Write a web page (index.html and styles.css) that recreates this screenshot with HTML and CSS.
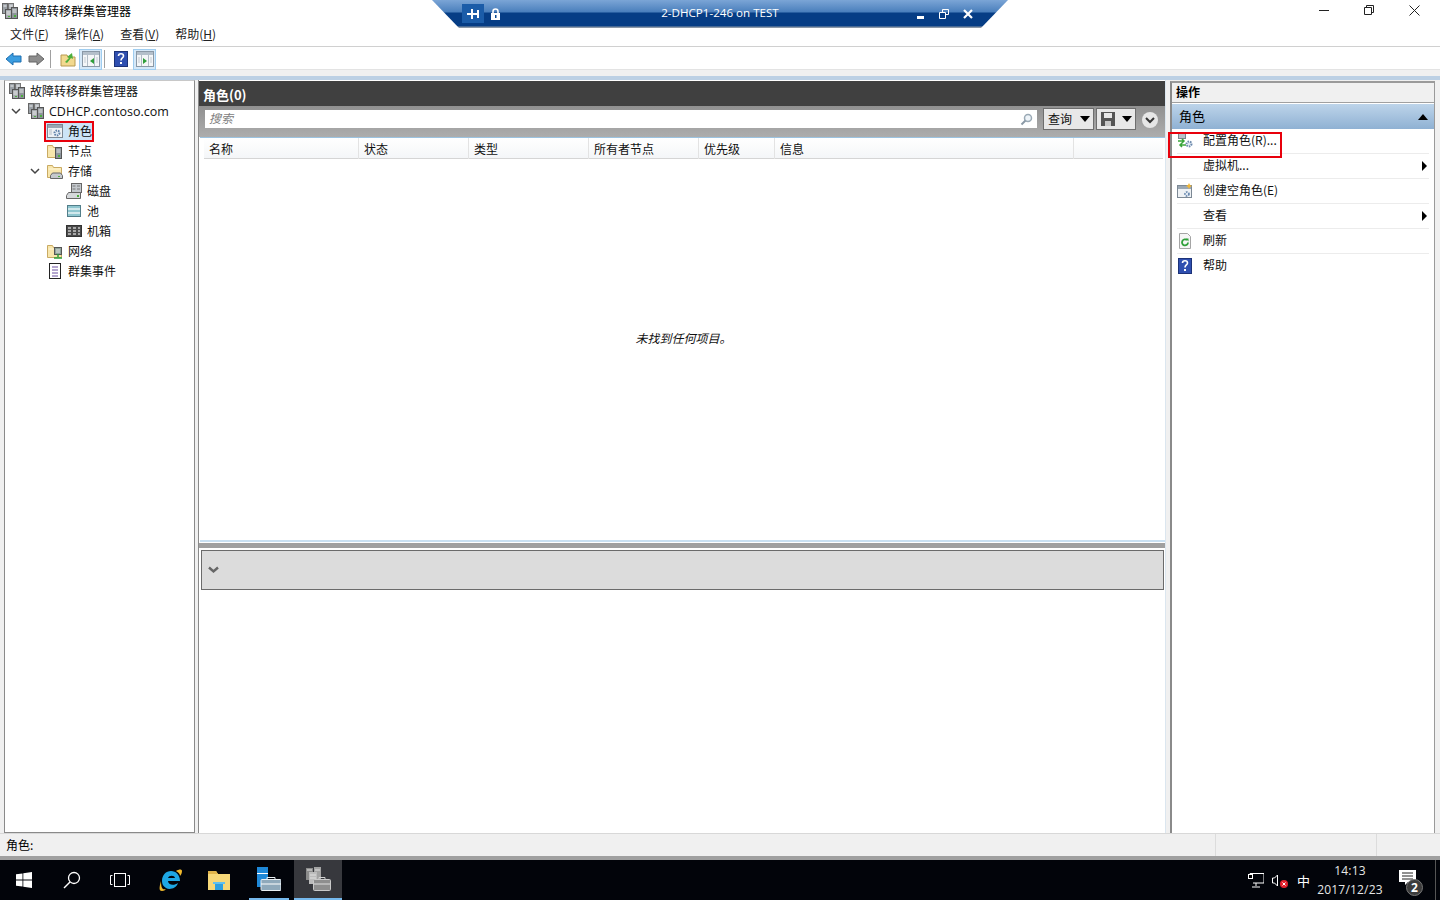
FILE: index.html
```html
<!DOCTYPE html>
<html lang="zh-CN">

<head>
    <meta charset="utf-8">
    <title>故障转移群集管理器</title>
    <link rel="stylesheet" href="styles.css">
</head>

<body>
    <svg class="defs" width="0" height="0">
        <defs>
            <symbol id="server" viewBox="0 0 16 16">
                <rect x="0.500" y="0.500" width="5" height="10" fill="#9aa0a6" stroke="#666"/>
                <rect x="6.500" y="0.500" width="5" height="10" fill="#b2b7bc" stroke="#777"/>
                <rect x="9.500" y="4.500" width="6" height="11" fill="#8f959b" stroke="#555"/>
                <rect x="3.500" y="6.500" width="6" height="9" fill="#a6abb0" stroke="#555"/>
                <path d="M1.500 3h3M7.500 3h3M4.500 9h4M4.500 11h4M10.500 7h4M10.500 9h4" stroke="#ececec"/>
                <rect x="12" y="12" width="2" height="2" fill="#4caf3c"/>
                <rect x="6" y="13" width="2" height="1" fill="#4caf3c"/>
            </symbol>
            <symbol id="folder" viewBox="0 0 16 16">
                <path d="M.5 2.500h5l1 2h8v10H.5z" fill="#f8e6ac" stroke="#c9aa63"/>
                <path d="M1.500 6h12" stroke="#fff6d8"/>
            </symbol>
            <symbol id="helpicon" viewBox="0 0 16 16">
                <rect x="1.500" y=".5" width="13" height="15" fill="#2f4fb0" stroke="#1c3278"/>
                <path d="M5.500 5c0-3 5-3 5 0 0 2-2.500 2-2.500 4.500" fill="none" stroke="#fff" stroke-width="1.600"/>
                <rect x="7" y="11" width="2" height="2" fill="#fff"/>
            </symbol>
            <symbol id="panel" viewBox="0 0 18 16">
                <rect x=".5" y=".5" width="17" height="15" fill="#f4f6f8" stroke="#8a98a6"/>
                <rect x="1" y="1" width="16" height="3" fill="#b4bfca"/>
                <path d="M5.500 4v11M12.500 4v11" stroke="#b3bdc7"/>
                <path d="M2 7h2M2 9h2M2 11h2M14 7h2M14 9h2M14 11h2" stroke="#c3cbd3"/>
            </symbol>
        </defs>
    </svg>

    <div class="rdp-bar">
        <div class="rdp-left">
            <span class="rdp-pin">
                <svg width="14" height="12" viewBox="0 0 14 12"><path d="M1 5h4V1h2v4h4V2h2v8h-2V7H7v4H5V7H1z" fill="#fff"/></svg>
            </span>
            <svg class="rdp-lock" width="11" height="12" viewBox="0 0 11 12"><path d="M3 5V3.500a2.500 2.500 0 0 1 5 0V5" fill="none" stroke="#fff" stroke-width="1.600"/><path d="M1 5h9v7H1z" fill="#fff"/><rect x="5" y="7" width="1.500" height="3" fill="#0a4a94"/></svg>
        </div>
        <div class="rdp-title">2-DHCP1-246 on TEST</div>
        <div class="rdp-right">
            <svg width="8" height="10" viewBox="0 0 8 10"><rect y="7" width="7" height="3" fill="#fff"/></svg>
            <svg width="10" height="10" viewBox="0 0 10 10"><path d="M3.500 3V.5h6v5H7M.5 3.500h6v6h-6z" fill="none" stroke="#fff"/></svg>
            <svg width="10" height="10" viewBox="0 0 10 10"><path d="M1 1l8 8M9 1L1 9" stroke="#fff" stroke-width="2.200"/></svg>
        </div>
    </div>

    <div class="app">
        <header class="titlebar">
            <svg class="icon16" width="16" height="16"><use href="#server"/></svg>
            <span class="app-title">故障转移群集管理器</span>
            <div class="win-btns">
                <svg width="10" height="10" viewBox="0 0 10 10"><path d="M0 5.500h10" stroke="#222"/></svg>
                <svg width="10" height="10" viewBox="0 0 10 10"><path d="M2.500 2.500V.5h7v7h-2M.5 2.500h7v7h-7z" fill="none" stroke="#222"/></svg>
                <svg width="11" height="11" viewBox="0 0 11 11"><path d="M.5.5l10 10M10.500.5l-10 10" stroke="#222"/></svg>
            </div>
        </header>

        <nav class="menubar">
            <span>文件(<u>F</u>)</span>
            <span>操作(<u>A</u>)</span>
            <span>查看(<u>V</u>)</span>
            <span>帮助(<u>H</u>)</span>
        </nav>

        <div class="toolbar">
            <svg width="17" height="14" viewBox="0 0 17 14"><path d="M1 7l7-6v3h8v6H8v3z" fill="#3b9de0" stroke="#1f6fb0"/></svg>
            <svg class="tool-next" width="17" height="14" viewBox="0 0 17 14"><path d="M16 7L9 1v3H1v6h8v3z" fill="#8d8d8d" stroke="#666"/></svg>
            <span class="tool-sep"></span>
            <svg class="tool-up" width="16" height="16" viewBox="0 0 16 16"><path d="M1 4h6l1 2h7v9H1z" fill="#f2d98f" stroke="#b89a50"/><path d="M5 11l4-4-2-1 5-4 1 6-2-1-4 5z" fill="#4caf3c"/></svg>
            <span class="tool-btn">
                <svg width="18" height="16"><use href="#panel"/><path d="M8 10l4-3v6z" fill="#2e9e3a"/></svg>
            </span>
            <span class="tool-sep sep-b"></span>
            <svg class="tool-help" width="16" height="16"><use href="#helpicon"/></svg>
            <span class="tool-btn btn-b">
                <svg width="18" height="16"><use href="#panel"/><path d="M7 7l4 3-4 3z" fill="#2e9e3a"/></svg>
            </span>
        </div>

        <main class="workspace">
            <aside class="tree">
                <div class="tree-row lv0">
                    <svg width="16" height="16"><use href="#server"/></svg>
                    <span>故障转移群集管理器</span>
                </div>
                <div class="tree-row lv1">
                    <svg class="twisty" width="10" height="7" viewBox="0 0 10 7"><path d="M1 1l4 4 4-4" fill="none" stroke="#444" stroke-width="1.500"/></svg>
                    <svg width="16" height="16"><use href="#server"/></svg>
                    <span class="latin">CDHCP.contoso.com</span>
                </div>
                <div class="tree-row lv2">
                    <span class="tree-sel">
                        <svg width="16" height="16" viewBox="0 0 16 16"><rect x=".5" y="1.500" width="15" height="13" fill="#eef1f4" stroke="#7c8894"/><rect x="1" y="2" width="14" height="3" fill="#9aa7b3"/><path d="M2 7h3M2 9h3M2 11h3" stroke="#b5bec7"/><circle cx="10" cy="10" r="2.500" fill="#dfe8f2" stroke="#5f80a8" stroke-width="2" stroke-dasharray="1.500 1"/></svg>
                        <span>角色</span>
                    </span>
                </div>
                <div class="tree-row lv2">
                    <svg width="16" height="16"><use href="#folder"/><rect x="8.500" y="4.500" width="6" height="11" fill="#8d949b" stroke="#555"/><path d="M9.500 7h4M9.500 9h4" stroke="#e6e6e6"/><rect x="11" y="12" width="2" height="2" fill="#4caf3c"/></svg>
                    <span>节点</span>
                </div>
                <div class="tree-row lv2">
                    <svg class="twisty" width="10" height="7" viewBox="0 0 10 7"><path d="M1 1l4 4 4-4" fill="none" stroke="#444" stroke-width="1.500"/></svg>
                    <svg width="16" height="16"><use href="#folder"/><path d="M3.500 15.500v-3l2-2.500h8l2 2.500v3z" fill="#c4c8cc" stroke="#666"/><rect x="11" y="13" width="2" height="1" fill="#4caf3c"/></svg>
                    <span>存储</span>
                </div>
                <div class="tree-row lv3">
                    <svg width="16" height="16" viewBox="0 0 16 16"><rect x="5.500" y=".5" width="10" height="9" fill="#c3c8cd" stroke="#666"/><path d="M6.500 3h3M11 3h3M6.500 6h3M11 6h3" stroke="#777"/><path d="M.5 15.500v-3l2-3h12v6z" fill="#d5d8db" stroke="#666"/><rect x="11" y="12" width="2" height="2" fill="#4caf3c"/></svg>
                    <span>磁盘</span>
                </div>
                <div class="tree-row lv3">
                    <svg width="16" height="16" viewBox="0 0 16 16"><rect x="1.500" y="2.500" width="13" height="11" fill="#8fc6cf" stroke="#527e8a"/><path d="M2 6h12M2 10h12" stroke="#e8f4f6" stroke-width="1.500"/></svg>
                    <span>池</span>
                </div>
                <div class="tree-row lv3">
                    <svg width="16" height="16" viewBox="0 0 16 16"><rect x=".5" y="2.500" width="15" height="11" fill="#4a4a4a" stroke="#333"/><path d="M2 5h3M7 5h3M12 5h2M2 8h3M7 8h3M12 8h2M2 11h3M7 11h3M12 11h2" stroke="#c9c9c9" stroke-width="1.500"/></svg>
                    <span>机箱</span>
                </div>
                <div class="tree-row lv2">
                    <svg width="16" height="16"><use href="#folder"/><rect x="7.500" y="4.500" width="7" height="7" fill="#8fa39a" stroke="#555"/><path d="M9 7h4M9 9h4" stroke="#e6e6e6"/><path d="M11 11v3M7 15h8" stroke="#2e9e3a" stroke-width="1.500"/></svg>
                    <span>网络</span>
                </div>
                <div class="tree-row lv2">
                    <svg width="16" height="16" viewBox="0 0 16 16"><rect x="2.500" y=".5" width="11" height="15" fill="#fff" stroke="#222"/><path d="M5 4h6M5 7h6M5 10h6M5 13h6" stroke="#6b4fa0"/></svg>
                    <span>群集事件</span>
                </div>
            </aside>

            <section class="center">
                <div class="center-head">角色(0)</div>
                <div class="filter-bar">
                    <div class="search-box">
                        <span>搜索</span>
                        <svg width="13" height="13" viewBox="0 0 13 13"><circle cx="8" cy="5" r="3.500" fill="#eef4f9" stroke="#9aa9b5" stroke-width="1.500"/><path d="M5.500 7.500L1.500 11.500" stroke="#8b9aa6" stroke-width="2"/></svg>
                    </div>
                    <div class="filter-btn query-btn"><span>查询</span><i class="caret"></i></div>
                    <div class="filter-btn save-btn">
                        <svg width="14" height="14" viewBox="0 0 14 14"><path d="M0 0h14v14H0z" fill="#555"/><rect x="3" y="1" width="8" height="5" fill="#e8e8e8"/><rect x="4" y="9" width="6" height="5" fill="#c8c8c8"/></svg>
                        <i class="caret"></i>
                    </div>
                    <div class="round-btn">
                        <svg width="10" height="7" viewBox="0 0 10 7"><path d="M1 1l4 4 4-4" fill="none" stroke="#333" stroke-width="2"/></svg>
                    </div>
                </div>
                <div class="grid-wrap">
                    <div class="grid-head">
                        <span class="col-name">名称</span>
                        <span class="col-state">状态</span>
                        <span class="col-type">类型</span>
                        <span class="col-owner">所有者节点</span>
                        <span class="col-prio">优先级</span>
                        <span class="col-info">信息</span>
                    </div>
                    <div class="grid-empty">未找到任何项目。</div>
                </div>
                <div class="splitter"></div>
                <div class="detail">
                    <div class="detail-bar">
                        <svg width="11" height="8" viewBox="0 0 11 8"><path d="M1 1.500l4.500 4 4.500-4" fill="none" stroke="#666" stroke-width="2.400"/></svg>
                    </div>
                </div>
            </section>

            <aside class="actions">
                <div class="actions-head">操作</div>
                <div class="actions-section">
                    <span>角色</span>
                    <i class="caret-up"></i>
                </div>
                <ul class="action-list">
                    <li class="action action-first">
                        <svg width="16" height="16" viewBox="0 0 16 16"><rect x="1.500" y=".5" width="7" height="5" fill="#b9c1c8" stroke="#7b858e"/><path d="M1 8h6M5 6l2 2-2 2M9 12H3M5 10l-2 2 2 2" stroke="#3aa53a" stroke-width="1.500" fill="none"/><circle cx="12" cy="11" r="2.500" fill="#dfe8f2" stroke="#6d8aad" stroke-width="2" stroke-dasharray="1.500 1"/></svg>
                        <span>配置角色(R)...</span>
                        <b class="red-box"></b>
                    </li>
                    <li class="action">
                        <span class="no-icon">虚拟机...</span>
                        <i class="caret-right"></i>
                    </li>
                    <li class="action">
                        <svg width="16" height="16" viewBox="0 0 16 16"><rect x=".5" y="2.500" width="14" height="12" fill="#eef1f4" stroke="#7c8894"/><rect x="1" y="3" width="13" height="3" fill="#9aa7b3"/><circle cx="10" cy="11" r="2" fill="#dfe8f2" stroke="#5f80a8" stroke-width="1.600" stroke-dasharray="1.500 1"/><path d="M12 0l1 2 2 1-2 1-1 2-1-2-2-1 2-1z" fill="#f2b636"/></svg>
                        <span>创建空角色(E)</span>
                    </li>
                    <li class="action">
                        <span class="no-icon">查看</span>
                        <i class="caret-right"></i>
                    </li>
                    <li class="action">
                        <svg width="16" height="16" viewBox="0 0 16 16"><path d="M2.500.5h8l3 3v12h-11z" fill="#f6f6f6" stroke="#a5a5a5"/><path d="M11 9.500a3 3 0 1 1-1-2.300" fill="none" stroke="#2fa03a" stroke-width="1.800"/><path d="M8.500 5.500h3v3z" fill="#2fa03a"/></svg>
                        <span>刷新</span>
                    </li>
                    <li class="action">
                        <svg width="16" height="16"><use href="#helpicon"/></svg>
                        <span>帮助</span>
                    </li>
                </ul>
            </aside>
        </main>

        <footer class="statusbar">
            <span class="status-main">角色:</span>
            <span class="status-cell"></span>
            <span class="status-cell cell-end"></span>
        </footer>
    </div>

    <div class="taskbar">
        <div class="task-left">
            <span class="task-btn">
                <svg width="16" height="16" viewBox="0 0 16 16"><path d="M0 2.300l6.500-.9v6.200H0zM7.300 1.300L16 0v7.600H7.300zM0 8.400h6.500v6.200L0 13.700zM7.300 8.400H16V16l-8.700-1.200z" fill="#fff"/></svg>
            </span>
            <span class="task-btn">
                <svg width="18" height="18" viewBox="0 0 18 18"><circle cx="11" cy="7" r="5.500" fill="none" stroke="#fff" stroke-width="1.300"/><path d="M7 11l-6 6" stroke="#fff" stroke-width="1.500"/></svg>
            </span>
            <span class="task-btn">
                <svg width="20" height="14" viewBox="0 0 20 14"><rect x="4.500" y=".5" width="11" height="13" fill="none" stroke="#fff"/><path d="M2.500 2.500H.5v9h2M17.500 2.500h2v9h-2" fill="none" stroke="#fff"/></svg>
            </span>
            <span class="task-btn task-ie">
                <svg width="24" height="24" viewBox="0 0 24 24"><path d="M3 13c0-6 4-10 9-10 5 0 9 4 9 10H9c0 4 6 5 10 2-2 6-9 7-12 5-3-2-4-4-4-7zm6-3h7c-.5-3-6-3-7 0z" fill="#1ea7e4" fill-rule="evenodd"/><path d="M17 3c3-2 6-2 6 0 0 2-1 4-2 5 0-2-1-3-4-5zM2 13C0 20 0 23 3 23c2 0 3-1 4-2-3 1-5 0-5-8z" fill="#f0b92d"/></svg>
            </span>
            <span class="task-btn">
                <svg width="22" height="19" viewBox="0 0 22 19"><path d="M0 0h8l2 3h12v16H0z" fill="#f6d778"/><path d="M0 0h8l2 3H0z" fill="#e0b44a"/><path d="M7 11h8v8H7z" fill="#2d9fe0"/><path d="M5 11h12v2H5z" fill="#60c0ef"/></svg>
            </span>
            <span class="task-btn task-open">
                <svg width="24" height="24" viewBox="0 0 24 24"><rect y="0" width="11" height="20" fill="#1e88d8"/><rect y="6" width="11" height="1" fill="#fff"/><rect x="4" y="12.500" width="20" height="11" rx="1" fill="#8fa9bb" stroke="#e8eef2"/><path d="M10 12.500v-2h8v2" fill="none" stroke="#e8eef2"/><path d="M4 17h20" stroke="#fff"/></svg>
            </span>
            <span class="task-btn task-active">
                <svg width="26" height="24" viewBox="0 0 26 24"><rect x="1" y="1" width="7" height="12" fill="#8b8b8b"/><rect x="9" y="0" width="7" height="12" fill="#a3a3a3"/><rect x="4" y="5" width="8" height="12" fill="#bcbcbc"/><path d="M2 3h5M10 3h5M5 8h6M5 11h6" stroke="#e0e0e0"/><rect x="8.500" y="12.500" width="17" height="11" rx="1" fill="#8e8e8e" stroke="#c9c9c9"/><path d="M9 17h16" stroke="#dedede"/><path d="M14 12.500v-2h6v2" fill="none" stroke="#d0d0d0"/></svg>
            </span>
        </div>
        <div class="tray">
            <svg width="16" height="15" viewBox="0 0 16 15"><path d="M2 3.500V.5h14v9.500H5M8 10v3M4 14h8" fill="none" stroke="#fff"/><rect x=".5" y="1.500" width="4" height="4" fill="#000" stroke="#fff"/></svg>
            <svg class="tray-sound" width="16" height="15" viewBox="0 0 16 15"><path d="M.5 5h2l3-3v11l-3-3h-2z" fill="none" stroke="#fff"/><circle cx="12" cy="11" r="4" fill="#e3202c"/><path d="M10.500 9.500l3 3M13.500 9.500l-3 3" stroke="#fff"/></svg>
            <span class="tray-ime">中</span>
            <div class="clock">
                <span>14:13</span>
                <span>2017/12/23</span>
            </div>
            <div class="notify">
                <svg width="17" height="15" viewBox="0 0 17 15"><path d="M0 0h17v12H9l-3 3v-3H0z" fill="#fff"/><path d="M3 3h11M3 6h11M3 9h11" stroke="#222"/></svg>
                <span class="notify-badge">2</span>
            </div>
            <span class="show-desktop"></span>
        </div>
    </div>
</body>

</html>
```
FILE: styles.css
```css
* {
    box-sizing: border-box;
}

html,
body {
    margin: 0;
    height: 100%;
    overflow: hidden;
}

body {
    display: flex;
    flex-direction: column;
    width: 1440px;
    height: 900px;
    font-family: "Noto Sans CJK SC", "Noto Sans", sans-serif;
    font-size: 12px;
    color: #000;
    background-color: #fff;
}

.defs {
    position: absolute;
}

svg {
    flex: none;
    display: block;
}

.app {
    flex: 1;
    display: flex;
    flex-direction: column;
    min-height: 0;
    background-color: #f0f0f0;
}

/* remote desktop bar */
.rdp-bar {
    position: absolute;
    top: 0;
    left: 432px;
    width: 576px;
    height: 28px;
    display: flex;
    align-items: flex-start;
    padding: 4px 34px 0 30px;
    color: #fff;
    background: linear-gradient(#7ba5d6 0, #4a7fbc 12px, #063d85 13px, #063d85 26px, #8a97a6 27px);
    clip-path: polygon(0 0, 100% 0, 549px 100%, 27px 100%);
    z-index: 5;
}

.rdp-left,
.rdp-right {
    display: flex;
    align-items: center;
    width: 136px;
    height: 19px;
}

.rdp-pin {
    display: flex;
    align-items: center;
    justify-content: center;
    width: 22px;
    height: 19px;
    margin-right: 6px;
    background-color: #1b5ca8;
}

.rdp-right {
    gap: 14px;
    justify-content: flex-end;
    padding-right: 1px;
}

.rdp-title {
    flex: 1;
    padding-left: 4px;
    text-align: center;
    font-family: "Open Sans", sans-serif;
    font-size: 11.600px;
    line-height: 18px;
}

/* window chrome */
.titlebar {
    height: 23px;
    display: flex;
    align-items: center;
    padding: 0 0 1px 2px;
    background-color: #fff;
}

.app-title {
    margin-left: 5px;
    padding-bottom: 2px;
}

.win-btns {
    margin-left: auto;
    display: flex;
    align-items: center;
    gap: 35px;
    padding: 0 20px 2px 0;
}

.menubar {
    height: 24px;
    display: flex;
    align-items: center;
    gap: 16px;
    padding: 0 0 3px 10px;
    background-color: #fff;
    border-bottom: 1px solid #d0d0d0;
    color: #222;
}

.toolbar {
    height: 23px;
    display: flex;
    align-items: center;
    padding: 2px 0 0 5px;
    background-color: #fff;
    border-bottom: 1px solid #e3e3e3;
}

.tool-next {
    margin-left: 6px;
}

.tool-sep {
    width: 1px;
    height: 18px;
    margin: 0 9px 0 5px;
    background-color: #a0a0a0;
}

.tool-up {
    margin-right: 3px;
}

.tool-btn {
    width: 23px;
    height: 21px;
    display: flex;
    align-items: center;
    justify-content: center;
    background-color: #d5e8f8;
    border: 1px solid #9fcdf0;
}

.toolbar .sep-b {
    margin: 0 8px 0 2px;
}

.tool-help {
    margin-right: 4px;
}

.workspace {
    flex: 1;
    min-height: 0;
    display: flex;
    padding: 10px 4px 0;
    background: linear-gradient(#f0f0f0 0, #f0f0f0 6px, #bcd0e4 6px, #bcd0e4 10px, #f0f0f0 10px);
}

/* tree */
.tree {
    width: 191px;
    background-color: #fff;
    border: 1px solid #8a8a8a;
    border-top-color: #c8c8c8;
}

.tree-row {
    height: 20px;
    display: flex;
    align-items: center;
    white-space: nowrap;
    color: #111;
}

.tree-row > span {
    margin-left: 5px;
    padding-bottom: 2px;
}

.tree-row > .latin {
    padding-bottom: 0;
    font-family: "Open Sans", sans-serif;
    font-size: 12.500px;
}

.lv0 {
    padding-left: 4px;
}

.lv1 {
    padding-left: 6px;
}

.lv2 {
    padding-left: 42px;
}

.lv3 {
    padding-left: 61px;
}

.twisty {
    margin-left: -17px;
    margin-right: 7px;
}

.lv1 .twisty {
    margin-left: 0;
    margin-right: 7px;
}

.tree-row > .tree-sel {
    display: flex;
    align-items: center;
    gap: 5px;
    margin: 0 0 0 -3px;
    padding: 0 0 0 1px;
    width: 50px;
    height: 21px;
    background-color: #cce4f7;
    border: 2px solid #e8000c;
}

.tree-sel span {
    padding-bottom: 2px;
}

/* center */
.center {
    width: 968px;
    margin-left: 3px;
    padding-top: 1px;
    display: flex;
    flex-direction: column;
    background-color: #fff;
    border-left: 1px solid #8a8a8a;
    border-right: 1px solid #dbe6ef;
}

.center-head {
    height: 25px;
    padding: 4px 0 0 4px;
    color: #fff;
    font-size: 13px;
    font-weight: 700;
    background-color: #404040;
}

.filter-bar {
    height: 31px;
    display: flex;
    align-items: flex-start;
    padding: 2px 7px 0 6px;
    background: linear-gradient(#909090, #adadad);
}

.search-box {
    width: 832px;
    height: 18px;
    margin-top: 2px;
    display: flex;
    align-items: center;
    justify-content: space-between;
    padding: 0 4px;
    background-color: #fff;
    color: #808080;
    font-style: italic;
}

.search-box span {
    padding-bottom: 3px;
}

.filter-btn {
    height: 22px;
    display: flex;
    align-items: center;
    padding-left: 4px;
    background-color: #e8e8e8;
    border: 1px solid #6e6e6e;
    color: #111;
}

.filter-btn span {
    padding-bottom: 2px;
}

.query-btn {
    width: 51px;
    margin-left: 6px;
}

.save-btn {
    width: 40px;
    margin-left: 2px;
}

.caret {
    margin-left: auto;
    margin-right: 3px;
    border-top: 6px solid #000;
    border-left: 5px solid transparent;
    border-right: 5px solid transparent;
}

.round-btn {
    width: 16px;
    height: 16px;
    margin: 4px 0 0 6px;
    display: flex;
    align-items: center;
    justify-content: center;
    border-radius: 50%;
    background-color: #e6e6e6;
}

.grid-wrap {
    height: 405px;
    display: flex;
    flex-direction: column;
    border-top: 1px solid #9cc3e0;
    border-bottom: 2px solid #c9e0f2;
    margin: 0 0 0 1px;
    padding: 0 2px 0 4px;
}

.grid-head {
    height: 21px;
    display: grid;
    grid-template-columns: 155px 110px 120px 110px 76px 299px;
    align-items: center;
    background: linear-gradient(#fff, #f4f6f8);
    border-bottom: 1px solid #d5d5d5;
}

.grid-head span {
    height: 100%;
    padding: 0 0 0 5px;
    line-height: 21px;
    border-right: 1px solid #e3e3e3;
    color: #111;
}

.grid-empty {
    flex: 1;
    display: flex;
    align-items: center;
    justify-content: center;
    padding-bottom: 24px;
    font-style: italic;
    color: #111;
}

.splitter {
    height: 5px;
    margin-top: 1px;
    background-color: #a0a0a0;
}

.detail {
    flex: 1;
    padding: 2px 1px 0 2px;
}

.detail-bar {
    height: 40px;
    display: flex;
    align-items: center;
    padding-left: 6px;
    background-color: #dcdcdc;
    border: 1px solid #6b6b6b;
}

/* actions pane */
.actions {
    width: 265px;
    margin: 1px 0 0 4px;
    background-color: #fff;
    border-left: 2px solid #8a8a8a;
    border-right: 1px solid #9a9a9a;
    border-top: 2px solid #9a9a9a;
}

.actions-head {
    height: 20px;
    padding: 0 0 0 4px;
    font-weight: 700;
    line-height: 18px;
    background-color: #f0f0f0;
    border-bottom: 1px solid #a0a0a0;
}

.actions-section {
    height: 25px;
    margin-top: 1px;
    display: flex;
    align-items: center;
    justify-content: space-between;
    padding: 0 6px 0 7px;
    font-size: 13px;
    background: linear-gradient(#bdd4ea, #8fb1d3);
}

.actions-section span {
    padding-bottom: 2px;
}

.caret-up {
    border-bottom: 6px solid #000;
    border-left: 5px solid transparent;
    border-right: 5px solid transparent;
}

.caret-right {
    margin-left: auto;
    margin-right: 2px;
    border-left: 5px solid #000;
    border-top: 5px solid transparent;
    border-bottom: 5px solid transparent;
}

.action-list {
    list-style: none;
    margin: 0;
    padding: 0 5px 0 5px;
}

.action {
    position: relative;
    height: 25px;
    display: flex;
    align-items: center;
    padding-bottom: 1px;
    border-bottom: 1px solid #ececec;
    color: #111;
}

.action:last-child {
    border-bottom: 1px solid #fff;
}

.action span {
    margin-left: 10px;
    padding-bottom: 2px;
}

.action .no-icon {
    margin-left: 26px;
}

.red-box {
    position: absolute;
    top: 3px;
    left: -9px;
    width: 114px;
    height: 26px;
    border: 2px solid #e8000c;
}

/* status bar */
.statusbar {
    height: 27px;
    display: flex;
    background-color: #f0f0f0;
    border-top: 1px solid #d8d8d8;
    border-bottom: 4px solid #a0a0a0;
}

.status-main {
    width: 1216px;
    padding-left: 6px;
    line-height: 22px;
    border-right: 1px solid #dcdcdc;
}

.status-cell {
    width: 161px;
    border-right: 1px solid #dcdcdc;
}

.cell-end {
    width: 59px;
    border-right: 0;
}

/* taskbar */
.taskbar {
    height: 40px;
    display: flex;
    justify-content: space-between;
    background-color: #02040a;
    color: #e6e6e6;
}

.task-left {
    display: flex;
}

.task-btn {
    width: 48px;
    height: 40px;
    display: flex;
    align-items: center;
    justify-content: center;
}

.task-ie {
    margin-left: 3px;
}

.task-open {
    width: 40px;
    margin-left: 6px;
    border-bottom: 2px solid #76b9ed;
}

.task-active {
    margin-left: 5px;
    background-color: #37383d;
    border-bottom: 2px solid #76b9ed;
}

.tray {
    display: flex;
    align-items: center;
}

.tray-sound {
    margin-left: 8px;
}

.tray-ime {
    margin-left: 9px;
    font-size: 13px;
    color: #fff;
}

.clock {
    width: 70px;
    margin-left: 5px;
    display: flex;
    flex-direction: column;
    align-items: center;
    line-height: 19px;
    letter-spacing: .2px;
    font-family: "Open Sans", sans-serif;
}

.notify {
    position: relative;
    margin-left: 14px;
    width: 36px;
    height: 32px;
    padding-top: 6px;
}

.notify-badge {
    position: absolute;
    left: 7px;
    top: 15px;
    width: 17px;
    height: 17px;
    line-height: 15px;
    border-radius: 50%;
    text-align: center;
    font-family: "Open Sans", sans-serif;
    font-weight: 700;
    font-size: 12px;
    color: #fff;
    background-color: #3c3c3c;
    border: 1px solid #777;
}

.show-desktop {
    width: 5px;
    height: 40px;
    border-left: 1px solid #555;
}
```
